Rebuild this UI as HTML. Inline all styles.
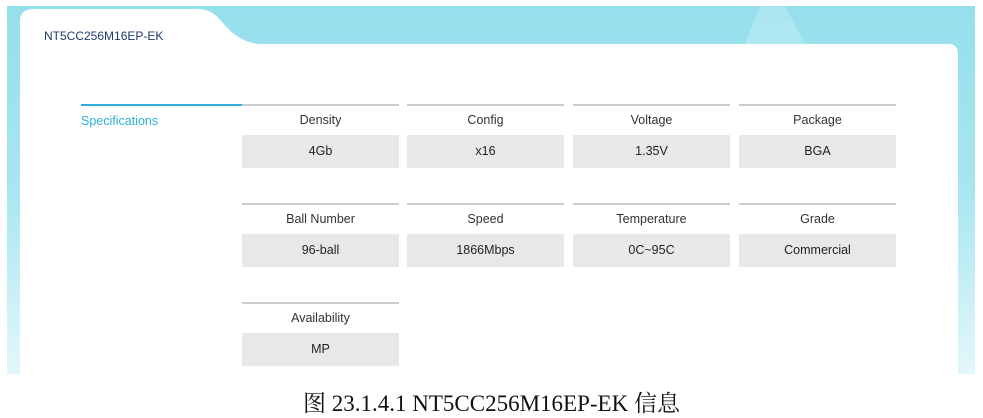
<!DOCTYPE html>
<html><head><meta charset="utf-8"><style>
body{margin:0;width:983px;height:418px;background:#fff;position:relative;overflow:hidden;font-family:"Liberation Sans",sans-serif}
.frame{position:absolute;left:7px;top:6px;width:968px;height:368px;background:linear-gradient(180deg,#95dfec 0%,#a8e6f1 50%,#e3f7fb 100%)}
.t{position:absolute;font-size:12.5px;color:#333;text-align:center;width:157px}
.line{position:absolute;height:2px;background:#ccc;width:157px}
.box{position:absolute;background:#e8e8e8;width:157px;height:33px;line-height:33px;text-align:center;font-size:12.5px;color:#222}
</style></head><body>
<div class="frame"></div>
<svg style="position:absolute;left:0;top:0" width="983" height="380">
<path d="M760 6 L785 6 L805 44 L745 44 Z" fill="#fff" opacity="0.22"/>
<path d="M20 374 L20 22 Q20 9 33 9 L198 9 Q212 9 222 22 Q240 44 262 44 L948 44 Q958 44 958 54 L958 374 Z" fill="#fff"/>
</svg>
<div style="position:absolute;left:44px;top:29px;font-size:12px;color:#1d3c6e">NT5CC256M16EP-EK</div>
<div style="position:absolute;left:81px;top:104px;width:161px;height:2px;background:#2eb0d6"></div>
<div style="position:absolute;left:81px;top:114px;font-size:12.5px;color:#2eb0d6">Specifications</div>

<div class="line" style="left:242px;top:104px"></div><div class="t" style="left:242px;top:113px">Density</div><div class="box" style="left:242px;top:135px">4Gb</div>
<div class="line" style="left:407px;top:104px"></div><div class="t" style="left:407px;top:113px">Config</div><div class="box" style="left:407px;top:135px">x16</div>
<div class="line" style="left:573px;top:104px"></div><div class="t" style="left:573px;top:113px">Voltage</div><div class="box" style="left:573px;top:135px">1.35V</div>
<div class="line" style="left:739px;top:104px"></div><div class="t" style="left:739px;top:113px">Package</div><div class="box" style="left:739px;top:135px">BGA</div>

<div class="line" style="left:242px;top:203px"></div><div class="t" style="left:242px;top:212px">Ball Number</div><div class="box" style="left:242px;top:234px">96-ball</div>
<div class="line" style="left:407px;top:203px"></div><div class="t" style="left:407px;top:212px">Speed</div><div class="box" style="left:407px;top:234px">1866Mbps</div>
<div class="line" style="left:573px;top:203px"></div><div class="t" style="left:573px;top:212px">Temperature</div><div class="box" style="left:573px;top:234px">0C~95C</div>
<div class="line" style="left:739px;top:203px"></div><div class="t" style="left:739px;top:212px">Grade</div><div class="box" style="left:739px;top:234px">Commercial</div>

<div class="line" style="left:242px;top:302px"></div><div class="t" style="left:242px;top:311px">Availability</div><div class="box" style="left:242px;top:333px">MP</div>

<div style="position:absolute;left:0;width:983px;top:385px;text-align:center;font-family:'Liberation Serif','Noto Serif CJK SC',serif;font-size:23px;color:#111">图 23.1.4.1 NT5CC256M16EP-EK 信息</div>
</body></html>
